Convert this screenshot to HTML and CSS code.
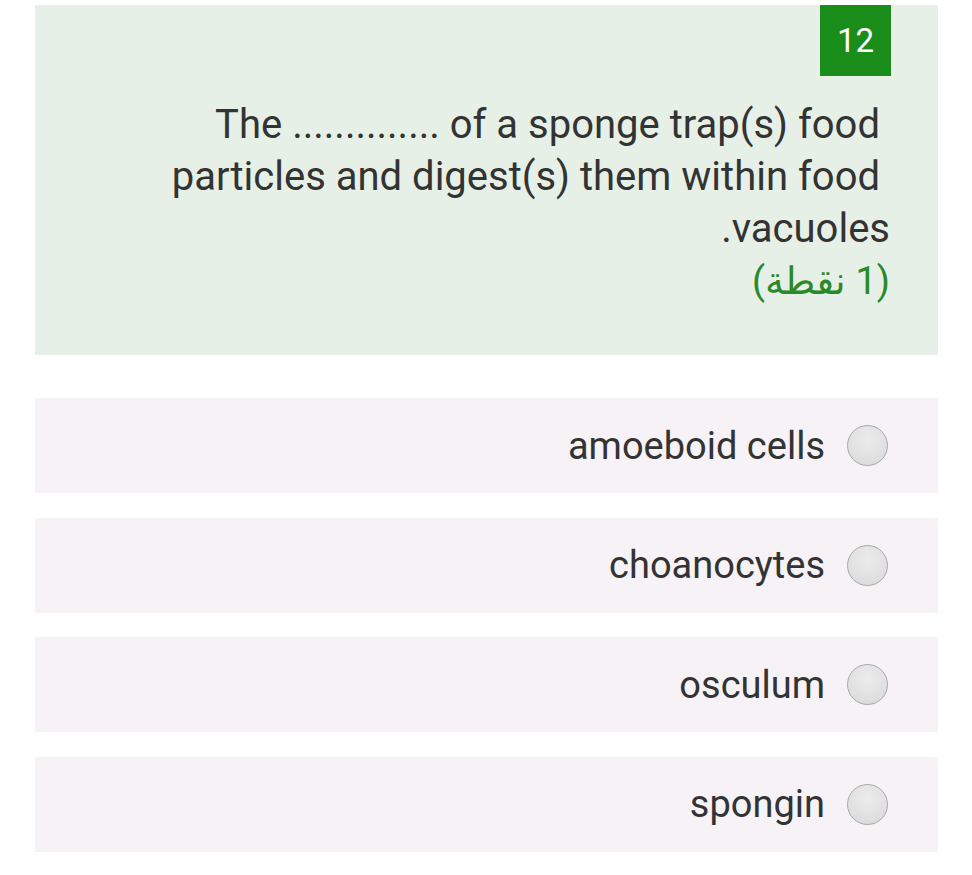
FILE: index.html
```html
<!DOCTYPE html>
<html lang="ar" dir="rtl">
<head>
<meta charset="utf-8">
<link rel="stylesheet" href="styles.css">
</head>
<body>
<div class="page">
  <section class="question">
    <div class="badge-row"><div class="badge">12</div></div>
    <div class="q-text">
      <div class="q-line">The .............. of a sponge trap(s) food</div>
      <div class="q-line">particles and digest(s) them within food</div>
      <div>vacuoles.</div>
    </div>
    <div class="points">(1 نقطة)</div>
  </section>
  <div class="options">
    <label class="option"><span class="radio"></span><span class="opt-text">amoeboid cells</span></label>
    <label class="option"><span class="radio"></span><span class="opt-text">choanocytes</span></label>
    <label class="option"><span class="radio"></span><span class="opt-text">osculum</span></label>
    <label class="option"><span class="radio"></span><span class="opt-text">spongin</span></label>
  </div>
</div>
</body>
</html>
```

FILE: styles.css
```css
html, body {
  margin: 0;
  padding: 0;
  background: #ffffff;
}
body {
  font-family: Roboto, "Noto Sans", "Liberation Sans", sans-serif;
  color: #333333;
}
.page {
  width: 903px;
  margin: 0 34px 0 35px;
  padding-top: 5px;
}
.question {
  background: #e6f0e6;
  padding: 0 48px 48px 48px;
  height: 350px;
  box-sizing: border-box;
}
.badge-row {
  display: flex;
  justify-content: flex-start;
  margin-right: -1px;
}
.badge {
  width: 71px;
  height: 71px;
  background: #1a8c1a;
  color: #ffffff;
  font-size: 33px;
  display: flex;
  align-items: center;
  justify-content: center;
}
.q-text {
  margin-top: 23px;
  font-size: 40px;
  line-height: 52px;
  text-align: right;
}
.q-line {
  margin-right: 10px;
}
.points {
  font-size: 38px;
  line-height: 52px;
  color: #2a8a2a;
}
.options {
  margin-top: 43px;
  display: flex;
  flex-direction: column;
  gap: 24.67px;
}
.option {
  height: 95px;
  background: #f6f2f6;
  display: flex;
  align-items: center;
  padding-right: 50px;
  gap: 22px;
}
.radio {
  width: 39px;
  height: 39px;
  border-radius: 50%;
  border: 1px solid #a9a9a9;
  background: radial-gradient(circle at 50% 35%, #ececec 0%, #dedede 70%, #d2d2d2 100%);
  flex: none;
}
.opt-text {
  font-size: 38px;
  color: #333333;
}
```
